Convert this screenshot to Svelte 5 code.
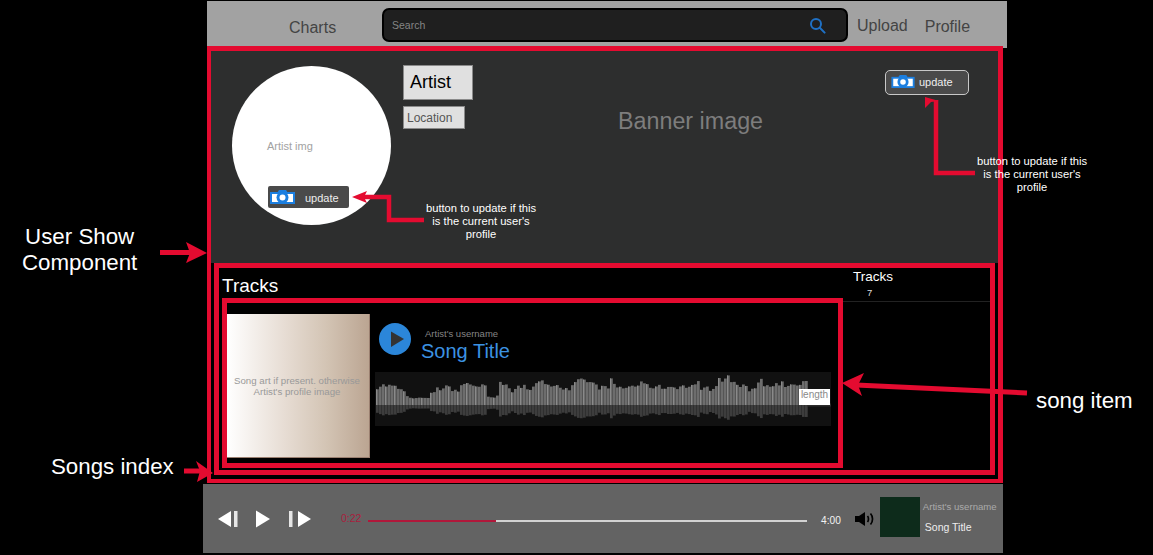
<script>
  const env = [[0,18],[5,20],[15,19],[22,17],[28,13],[32,7],[52,7],[60,16],[72,18],[82,14],[88,22],[102,19],[108,21],[112,8],[120,7],[125,20],[130,22],[137,12],[142,18],[155,17],[165,23],[182,20],[192,14],[202,24],[210,25],[225,17],[235,20],[245,17],[262,20],[285,18],[318,19],[335,16],[343,25],[350,26],[358,22],[368,18],[375,15],[382,22],[388,21],[398,21],[408,16],[416,22],[422,18],[428,23],[433,20]];
  function envelope(x) {
    for (let i = 1; i < env.length; i++) {
      if (x <= env[i][0]) {
        const [a, b] = env[i - 1], [c, d] = env[i];
        return b + ((d - b) * (x - a)) / (c - a);
      }
    }
    return 1.5;
  }
  let seed = 7;
  const rnd = () => ((seed = (seed * 16807) % 2147483647) / 2147483647);
  let top = '', bottom = '', lite = '', gap = '', tail = '';
  let h = 0;
  for (let x = 1; x < 456; x++) {
    if (x < 433) {
      if (x % 3 === 1) {
        const quiet = envelope(x) < 9;
        h = envelope(x) + (rnd() - 0.55) * (quiet ? 1 : 5) + (!quiet && rnd() > 0.93 ? 5 : 0);
      }
      top += `M${x + 0.5} ${33 - h}V33`;
      bottom += `M${x + 0.5} 33V${33 + h * 0.5}`;
      if (x % 9 === 1) lite += `M${x + 0.5} ${33 - h}V33`;
      if (x % 3 === 0) gap += `M${x + 0.5} ${33 - h}V${33 + h * 0.5}`;
    } else {
      tail += `M${x + 0.5} 31.500V34.500`;
    }
  }
</script>

<div class="page">
  <header class="nav">
    <span class="charts">Charts</span>
    <div class="search">
      <span>Search</span>
      <svg width="17" height="17" viewBox="0 0 17 17" fill="none" stroke="#1f70c4" stroke-width="2">
        <circle cx="7" cy="7" r="5" />
        <path d="M10.8 10.8 15.6 15.6" stroke-linecap="round" />
      </svg>
    </div>
    <span class="upload">Upload</span>
    <span class="profile">Profile</span>
  </header>

  <main class="show">
    <section class="banner">
      <div class="avatar">
        <span class="avatar-label">Artist img</span>
        <div class="update small">
          <svg width="25" height="14" viewBox="0 0 25 14">
            <path d="M7 3 9 0H16L18 3Z" fill="#1c7fe0" />
            <rect x="0" y="2" width="25" height="12" fill="#1c7fe0" />
            <rect x="2" y="4" width="21" height="8" fill="#fff" />
            <circle cx="12.5" cy="7.5" r="6" fill="#1c7fe0" />
            <circle cx="12.5" cy="7.5" r="3" fill="#fff" />
          </svg>
          <span class="update-text">update</span>
        </div>
      </div>
      <div class="who">
        <div class="artist">Artist</div>
        <div class="location">Location</div>
      </div>
      <div class="banner-label">Banner image</div>
      <div class="update large">
        <svg width="24" height="13" viewBox="0 0 25 14">
          <path d="M7 3 9 0H16L18 3Z" fill="#1c7fe0" />
          <rect x="0" y="2" width="25" height="12" fill="#1c7fe0" />
          <rect x="2" y="4" width="21" height="8" fill="#fff" />
          <circle cx="12.5" cy="7.5" r="6" fill="#1c7fe0" />
          <circle cx="12.5" cy="7.5" r="3" fill="#fff" />
        </svg>
        <span>update</span>
      </div>
    </section>

    <section class="tracks">
      <div class="index">
        <h2>Tracks</h2>
        <article class="song">
          <div class="art">Song art if present. otherwise Artist's profile image</div>
          <div class="detail">
            <div class="head">
              <svg class="play" width="32" height="32" viewBox="0 0 32 32">
                <circle cx="16" cy="16" r="16" fill="#2b86d9" />
                <path d="M12 8.500 25 16 12 24Z" fill="#333" />
              </svg>
              <div class="meta">
                <span class="username">Artist's username</span>
                <span class="title">Song Title</span>
              </div>
            </div>
            <div class="wave">
              <svg width="456" height="54" viewBox="0 0 456 54">
                <path d={top} stroke="#6d6d6d" stroke-width="1" fill="none" />
                <path d={lite} stroke="#8a8a8a" stroke-width="1" fill="none" />
                <path d={bottom} stroke="#3d3d3d" stroke-width="1" fill="none" />
                <path d={gap} stroke="#000" stroke-opacity="0.22" stroke-width="1" fill="none" />
                <path d={tail} stroke="#2c2c2c" stroke-width="1" fill="none" />
              </svg>
              <span class="length">length</span>
            </div>
          </div>
        </article>
      </div>
      <aside class="stats">
        <span class="stat-label">Tracks</span>
        <span class="stat-num">7</span>
      </aside>
    </section>
  </main>

  <footer class="player">
    <svg class="ctrl prev" width="21" height="18" viewBox="0 0 21 18">
      <path d="M0 9 13 1V17Z" fill="#fff" />
      <rect x="16" y="1" width="3.500" height="16" fill="#e6e6e6" />
    </svg>
    <svg class="ctrl playbtn" width="14" height="18" viewBox="0 0 14 18">
      <path d="M0 .5 14 9 0 17.500Z" fill="#fff" />
    </svg>
    <svg class="ctrl next" width="22" height="18" viewBox="0 0 22 18">
      <rect x="0" y="1" width="3.500" height="16" fill="#e6e6e6" />
      <path d="M9 1 22 9 9 17Z" fill="#fff" />
    </svg>
    <span class="elapsed">0:22</span>
    <div class="bar"><div class="bar-fill" style="width: {(128 / 439) * 100}%"></div></div>
    <span class="total">4:00</span>
    <svg class="volume" width="20" height="16" viewBox="0 0 20 16" fill="none">
      <path d="M0 5H4L10 1V15L4 11H0Z" fill="#000" />
      <path d="M12.500 5C13.800 6.500 13.800 9.500 12.500 11" stroke="#000" stroke-width="1.700" />
      <path d="M15.500 2.500C18.200 5.500 18.200 10.500 15.500 13.500" stroke="#000" stroke-width="1.700" />
    </svg>
    <div class="thumb"></div>
    <div class="now">
      <span class="now-user">Artist's username</span>
      <span class="now-title">Song Title</span>
    </div>
  </footer>

  <svg class="arrows" width="1153" height="555" viewBox="0 0 1153 555" fill="none" stroke="#e40b30" stroke-width="5">
    <path d="M160 252.500H192" />
    <path d="M207 253 186 242 190 253 186 263Z" fill="#e40b30" stroke="none" />
    <path d="M184 471H200" />
    <path d="M213 473 196 461 200 471 197 482Z" fill="#e40b30" stroke="none" />
    <path d="M856 385 1027 393" />
    <path d="M842 383 864 373 858 385 862 396Z" fill="#e40b30" stroke="none" />
    <path d="M362 197H389V220H424" stroke-width="4.500" />
    <path d="M352 197 367 191 364 197 367 203Z" fill="#e40b30" stroke="none" />
    <path d="M936 100V173H975" stroke-width="4.500" />
    <path d="M925 97 939 101 931 102 925 108Z" fill="#e40b30" stroke="none" />
  </svg>

  <p class="note note-a">button to update if this<br />is the current user's<br />profile</p>
  <p class="note note-b">button to update if this<br />is the current user's<br />profile</p>
  <p class="label label-show">User Show<br />Component</p>
  <p class="label label-index">Songs index</p>
  <p class="label label-song">song item</p>
</div>

<style>
  :global(body) {
    margin: 0;
    background: #000;
  }
  .page {
    position: relative;
    width: 1153px;
    height: 555px;
    overflow: hidden;
    background: #000;
    padding-top: 1px;
    box-sizing: border-box;
    font-family: "Liberation Sans", Arial, sans-serif;
  }
  .nav {
    width: 800px;
    height: 47px;
    margin-left: 207px;
    padding-top: 2px;
    background: #a2a2a2;
    display: flex;
    align-items: center;
    color: #444;
    font-size: 16px;
    box-sizing: border-box;
  }
  .charts {
    margin-left: 82px;
    margin-top: 5px;
    width: 93px;
  }
  .search {
    box-sizing: border-box;
    width: 466px;
    height: 34px;
    margin-top: -1px;
    background: #1f1f1f;
    border: 2px solid #000;
    border-radius: 7px;
    display: flex;
    align-items: center;
    justify-content: space-between;
    padding: 0 20px 0 8px;
    color: #858585;
    font-size: 10.500px;
  }
  .upload {
    margin-left: 9px;
    margin-top: 1px;
  }
  .profile {
    margin-left: 17px;
    margin-top: 3px;
  }
  .show {
    box-sizing: border-box;
    width: 796px;
    height: 437px;
    margin: -2px 0 0 207px;
    border: 4px solid #e40b30;
    border-width: 5px 5px 4px 4px;
    background: #000;
    position: relative;
  }
  .banner {
    height: 212px;
    background: #2d2e2e;
    display: flex;
    position: relative;
  }
  .avatar {
    position: relative;
    flex: none;
    width: 159px;
    height: 159px;
    margin: 15px 0 0 21px;
    background: #fff;
    border-radius: 50%;
  }
  .avatar-label {
    position: absolute;
    left: 35px;
    top: 74px;
    font-size: 11px;
    color: #a2a2a2;
  }
  .update {
    display: flex;
    align-items: center;
    box-sizing: border-box;
    background: #4a4a4a;
    color: #eee;
    font-size: 11px;
  }
  .update.small {
    position: absolute;
    left: 36px;
    top: 120px;
    width: 81px;
    height: 22px;
    border-radius: 2px;
    padding-left: 2px;
    gap: 10px;
  }
  .update-text {
    margin-top: 2px;
  }
  .update.large {
    position: absolute;
    left: 674px;
    top: 19px;
    width: 84px;
    height: 25px;
    border: 1px solid #c8c8c8;
    border-radius: 5px;
    padding: 0 0 2px 5px;
    gap: 4px;
  }
  .who {
    margin: 14px 0 0 12px;
    display: flex;
    flex-direction: column;
    align-items: flex-start;
    gap: 6px;
    width: 215px;
  }
  .artist {
    box-sizing: border-box;
    width: 70px;
    height: 35px;
    line-height: 33px;
    padding-left: 6px;
    background: #e0e0e0;
    border: 1px solid #8a8a8a;
    color: #000;
    font-size: 18px;
  }
  .location {
    box-sizing: border-box;
    width: 62px;
    height: 23px;
    line-height: 22px;
    padding-left: 3px;
    background: #e0e0e0;
    border: 1px solid #8a8a8a;
    color: #555;
    font-size: 12px;
  }
  .banner-label {
    margin-top: 56px;
    color: #7d7d7d;
    font-size: 23.300px;
    line-height: 28px;
  }
  .tracks {
    box-sizing: border-box;
    height: 212px;
    margin: 0 3px;
    border: 5px solid #e40b30;
    display: flex;
    color: #fff;
  }
  .index {
    width: 624px;
    padding-left: 3px;
    box-sizing: border-box;
    flex: none;
  }
  h2 {
    margin: 0;
    height: 30px;
    font-size: 19px;
    font-weight: 400;
    line-height: 35px;
  }
  .song {
    box-sizing: border-box;
    height: 170px;
    border: 5px solid #e40b30;
    display: flex;
    padding-top: 11px;
  }
  .art {
    box-sizing: border-box;
    flex: none;
    width: 143px;
    height: 144px;
    padding: 0 7px 0 5px;
    display: flex;
    align-items: center;
    text-align: center;
    justify-content: center;
    background: linear-gradient(90deg, #fff, #e7ddd4 40%, #d3c4b4 70%, #bba592);
    border: 1px solid #9a7f70;
    border-left: 0;
    border-top: 0;
    color: #999;
    font-size: 9.700px;
    line-height: 11px;
  }
  .detail {
    margin-left: 5px;
    width: 456px;
  }
  .head {
    display: flex;
    height: 58px;
    padding: 9px 0 0 4px;
    box-sizing: border-box;
  }
  .play {
    flex: none;
  }
  .meta {
    display: flex;
    flex-direction: column;
    margin-left: 10px;
  }
  .username {
    margin: 5px 0 1px 4px;
    color: #858585;
    font-size: 9.500px;
    line-height: 11px;
  }
  .title {
    color: #3c92e2;
    font-size: 20px;
    line-height: 23px;
  }
  .wave {
    position: relative;
    height: 54px;
    background: #111;
    line-height: 0;
  }
  .length {
    position: absolute;
    left: 424px;
    top: 17px;
    box-sizing: border-box;
    width: 31px;
    height: 16px;
    background: #fff;
    color: #8a8a8a;
    font-size: 10px;
    line-height: 12px;
    text-align: center;
  }
  .stats {
    box-sizing: border-box;
    flex: 1;
    height: 34px;
    border-bottom: 1px solid #222;
    display: flex;
    flex-direction: column;
    padding-left: 10px;
  }
  .stat-label {
    font-size: 13.500px;
    line-height: 18px;
  }
  .stat-num {
    margin-left: 14px;
    font-size: 9.500px;
    line-height: 14px;
    color: #ddd;
  }
  .player {
    box-sizing: border-box;
    width: 800px;
    height: 69px;
    margin: 1px 0 0 203px;
    background: #636363;
    display: flex;
    align-items: center;
    color: #fff;
    position: relative;
  }
  .ctrl {
    flex: none;
  }
  .prev {
    margin-left: 15px;
  }
  .playbtn {
    margin-left: 17px;
  }
  .next {
    margin-left: 19px;
  }
  .elapsed {
    width: 27px;
    margin: 0 0 2px 30px;
    color: #a9203d;
    font-size: 10.500px;
  }
  .bar {
    flex: none;
    width: 439px;
    height: 2px;
    margin-top: 5px;
    background: #d2d2d2;
  }
  .bar-fill {
    height: 100%;
    background: #b0173a;
  }
  .total {
    margin-left: 14px;
    font-size: 10.200px;
    color: #f2f2f2;
    margin-top: 4px;
  }
  .volume {
    margin-left: 14px;
    flex: none;
  }
  .thumb {
    flex: none;
    width: 40px;
    height: 40px;
    margin: 0 0 3px 5px;
    background: #0d2b1b;
  }
  .now {
    display: flex;
    flex-direction: column;
    margin-left: 3px;
    margin-bottom: 4px;
  }
  .now-user {
    color: #aaa;
    font-size: 9.600px;
    line-height: 12px;
  }
  .now-title {
    margin: 8px 0 0 2px;
    color: #eee;
    font-size: 10.500px;
    line-height: 12px;
  }
  .arrows {
    position: absolute;
    left: 0;
    top: 0;
  }
  .note {
    position: absolute;
    margin: 0;
    width: 130px;
    text-align: center;
    color: #fff;
    font-size: 11.200px;
    line-height: 13px;
  }
  .note-a {
    left: 416px;
    top: 202px;
  }
  .note-b {
    left: 967px;
    top: 155px;
  }
  .label {
    position: absolute;
    margin: 0;
    color: #fff;
    font-size: 22.300px;
    line-height: 26px;
    text-align: center;
    white-space: nowrap;
  }
  .label-show {
    left: 22px;
    top: 224px;
  }
  .label-index {
    left: 51px;
    top: 454px;
  }
  .label-song {
    left: 1036px;
    top: 388px;
  }
</style>
